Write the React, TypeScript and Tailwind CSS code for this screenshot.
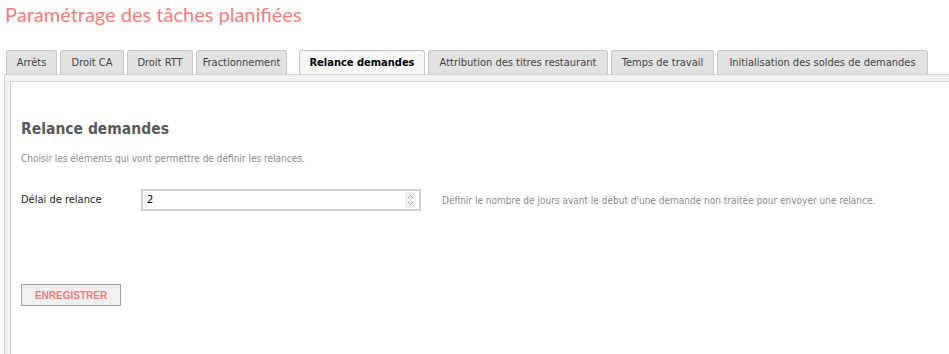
import React from 'react';

const tabs = [
  { label: 'Arrêts', w: 'w-[51px]' },
  { label: 'Droit CA', w: 'w-[64px]' },
  { label: 'Droit RTT', w: 'w-[66px]' },
  { label: 'Fractionnement', w: 'w-[91px]' },
  { label: 'Relance demandes', w: 'w-[126px]', active: true },
  { label: 'Attribution des titres restaurant', w: 'w-[180px]' },
  { label: 'Temps de travail', w: 'w-[103px]' },
  { label: 'Initialisation des soldes de demandes', w: 'w-[211px]' },
];

const App = () => {
  return (
    <div className="h-[354px] w-[949px] overflow-hidden bg-white font-['DejaVu_Sans_Condensed','Noto_Sans',sans-serif]">
      <h1 className="pl-[5px] pt-[1px] font-['Lato',sans-serif] text-[20px] leading-[26px] text-[#f47c7c]">
        Paramétrage des tâches planifiées
      </h1>

      <div className="mt-[23px] flex items-end pl-[6px]">
        {tabs.map((t, i) => (
          <div
            key={t.label}
            className={`${t.w} ${i === 4 ? 'ml-[12px]' : i > 0 ? 'ml-[3px]' : ''} flex h-[24px] items-center justify-center rounded-t-[3px] border border-b-0 pt-[2px] text-[11px] whitespace-nowrap ${
              t.active
                ? 'border-[#c5c5c5] bg-[#f6f6f6] font-bold text-black'
                : 'border-[#c5c5c5] bg-[#e2e2e2] text-[#444]'
            }`}
          >
            {t.label}
          </div>
        ))}
      </div>

      <div className="ml-[4px] border-t border-l border-[#d3d3d3] bg-[#f2f2f2] pt-[6px] pl-[5px]">
        <div className="h-[300px] border-t border-l border-[#d3d3d3] bg-white pl-[10px]">
          <h2 className="pt-[37px] text-[15.5px] leading-[20px] font-bold text-[#5a5a5a]">Relance demandes</h2>
          <p className="mt-[13px] text-[10px] leading-[14px] text-[#8a8a8a]">
            Choisir les éléments qui vont permettre de définir les relances.
          </p>

          <div className="mt-[23px] flex items-center">
            <label className="w-[120px] text-[11px] text-[#222]">Délai de relance</label>
            <div className="flex h-[22px] w-[280px] items-center justify-between border-2 border-[#cfcfcf] bg-white pr-[3px] pl-[4px]">
              <span className="text-[11px] text-black">2</span>
              <svg width="11" height="16" viewBox="0 0 11 16" className="bg-[#f0f0f0]">
                <path d="M3 6 L5.5 3.5 L8 6" fill="none" stroke="#9a9a9a" strokeWidth="1" />
                <path d="M3 10 L5.5 12.5 L8 10" fill="none" stroke="#9a9a9a" strokeWidth="1" />
              </svg>
            </div>
            <span className="ml-[21px] text-[10px] text-[#8a8a8a]">
              Définir le nombre de jours avant le début d'une demande non traitée pour envoyer une relance.
            </span>
          </div>

          <button className="mt-[73px] h-[22px] w-[100px] border border-[#a0a0a0] bg-[#efefef] font-['Liberation_Sans',sans-serif] text-[10px] font-bold text-[#f47c7c]">
            ENREGISTRER
          </button>
        </div>
      </div>
    </div>
  );
};

export default App;
